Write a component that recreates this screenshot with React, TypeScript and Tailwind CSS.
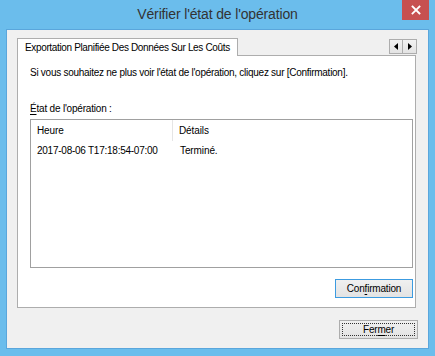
import React from 'react';

const ui = { fontFamily: '"Liberation Sans", Arial, sans-serif' };

const CloseGlyph = () => (
  <svg width="10" height="10" viewBox="0 0 10 10">
    <path d="M1.5 1.5 L8.5 8.5 M8.5 1.5 L1.5 8.5" stroke="#fff" strokeWidth="1.8" strokeLinecap="square" />
  </svg>
);

const Arrow = ({ dir }: { dir: 'left' | 'right' }) => (
  <svg width="4" height="7" viewBox="0 0 4 7">
    {dir === 'left' ? <path d="M4 0 L0 3.5 L4 7 Z" fill="#000" /> : <path d="M0 0 L4 3.5 L0 7 Z" fill="#000" />}
  </svg>
);

export default function App() {
  return (
    <div className="w-[435px] h-[356px] bg-[#6bbdec] flex flex-col text-black" style={ui}>
      {/* title bar */}
      <div className="relative h-[29px] flex items-center justify-center shrink-0">
        <span className="text-[14px] text-[#333] tracking-[-0.15px]">Vérifier l'état de l'opération</span>
        <button className="absolute right-[6px] top-0 w-[27px] h-[20px] bg-[#c75050] flex items-center justify-center">
          <CloseGlyph />
        </button>
      </div>

      {/* client area */}
      <div className="mx-[6px] h-[320px] border border-[#5aa6dc] bg-[#f0f0f0] flex flex-col">
        {/* tab strip */}
        <div className="flex items-end h-[25px] pl-[10px] pr-[11px] pt-[8px]">
          <div className="relative z-10 h-[18px] -mb-[1px] px-[7px] bg-white border border-b-0 border-[#adadad] flex items-center text-[10px] tracking-[-0.35px] whitespace-nowrap">
            Exportation Planifiée Des Données Sur Les Coûts
          </div>
          <div className="ml-auto self-start mt-[1px] flex">
            <div className="w-[14px] h-[15px] border border-[#adadad] bg-gradient-to-b from-[#f2f2f2] to-[#e3e3e3] flex items-center justify-center">
              <Arrow dir="left" />
            </div>
            <div className="w-[14px] h-[15px] border border-l-0 border-[#adadad] bg-gradient-to-b from-[#f2f2f2] to-[#e3e3e3] flex items-center justify-center">
              <Arrow dir="right" />
            </div>
          </div>
        </div>

        {/* tab panel */}
        <div className="ml-[10px] mr-[12px] h-[253px] border border-[#adadad] bg-white flex flex-col pl-[12px] pr-[2px] pt-[10px]">
          <div className="text-[10px] leading-[14px] tracking-[-0.27px] whitespace-nowrap">
            Si vous souhaitez ne plus voir l'état de l'opération, cliquez sur [Confirmation].
          </div>
          <div className="mt-[22px] text-[10px] leading-[14px] tracking-[-0.2px]">
            <span className="underline underline-offset-2">É</span>tat de l'opération :
          </div>

          {/* list view */}
          <div className="mt-[3px] h-[149px] border border-[#a0a0a0] bg-white flex flex-col text-[10px] tracking-[-0.1px]">
            <div className="flex h-[21px] shrink-0">
              <div className="w-[142px] pl-[6px] border-r border-[#e5e5e5] flex items-center">Heure</div>
              <div className="pl-[6px] flex items-center">Détails</div>
            </div>
            <div className="flex h-[17px] mt-[1px] items-center">
              <div className="w-[143px] pl-[6px] tracking-[-0.25px]">2017-08-06 T17:18:54-07:00</div>
              <div className="pl-[6px]">Terminé.</div>
            </div>
          </div>

          <div className="mt-[11px] flex justify-end">
            <button className="w-[78px] h-[19px] border border-[#3c9be0] bg-gradient-to-b from-[#f0f0f0] to-[#e3e3e3] text-[10px] tracking-[-0.2px] flex items-center justify-center">
              <span>
                Con<span className="underline underline-offset-2">f</span>irmation
              </span>
            </button>
          </div>
        </div>

        {/* footer */}
        <div className="mt-[12px] flex justify-end pr-[10px]">
          <button className="w-[79px] h-[19px] border border-[#adadad] bg-gradient-to-b from-[#f0f0f0] to-[#e3e3e3] p-[2px] flex">
            <span className="flex-1 border border-dotted border-[#333] flex items-center justify-center text-[10px] tracking-[-0.2px]">
              <span>
                Fer<span className="underline underline-offset-2">m</span>er
              </span>
            </span>
          </button>
        </div>
      </div>
    </div>
  );
}
